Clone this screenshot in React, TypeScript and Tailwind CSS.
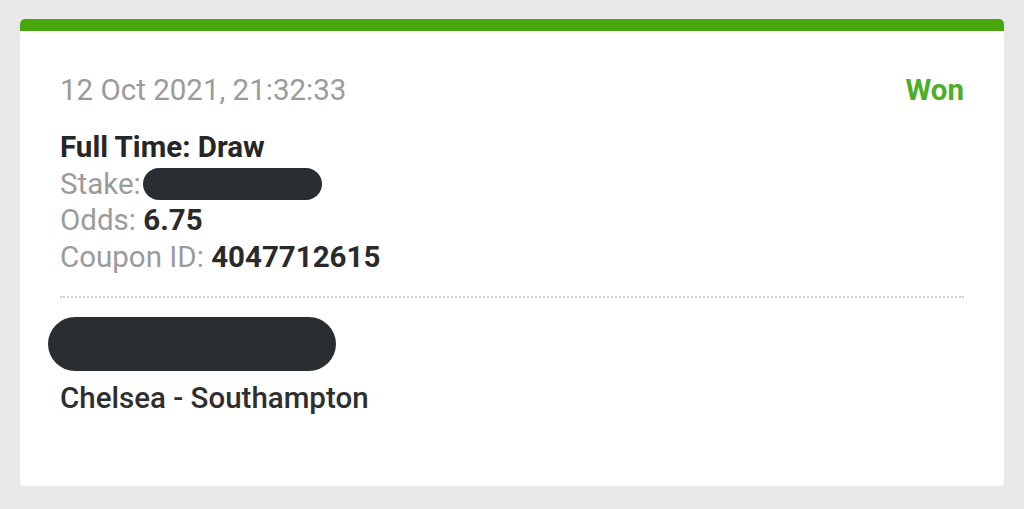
export default function App() {
  return (
    <main className="h-[509px] w-[1024px] bg-[#e8e8e8] px-[20px] pt-[19px] font-['Roboto',sans-serif]">
      <div className="h-[467px] overflow-hidden rounded-t-[5px] rounded-b-[3px] bg-white">
        <div className="h-[12px] bg-[#47a80e]" />
        <div className="px-[40px] pt-[41px]">
          <div className="flex items-center justify-between text-[29.5px] leading-[36px]">
            <span className="text-[#9b9b9b]">12 Oct 2021, 21:32:33</span>
            <span className="font-bold text-[#4dae27]">Won</span>
          </div>

          <div className="mt-[21px] text-[29.5px] leading-[36.67px]">
            <p className="font-bold text-[#262626]">Full Time: Draw</p>
            <p className="flex items-center text-[#9b9b9b]">
              Stake:
              <span className="ml-[2px] inline-block h-[32px] w-[179px] rounded-full bg-[#2a2d31]" />
            </p>
            <p className="text-[#9b9b9b]">
              Odds: <span className="font-bold text-[#2a2a2a]">6.75</span>
            </p>
            <p className="text-[#9b9b9b]">
              Coupon ID: <span className="font-bold text-[#2a2a2a]">4047712615</span>
            </p>
          </div>

          <div className="mt-[20px] border-t-2 border-dotted border-[#cfcfcf]" />

          <div className="-ml-[12px] mt-[19px] h-[54px] w-[288px] rounded-full bg-[#2a2d31]" />
          <p className="mt-[9px] text-[29.5px] font-medium leading-[36px] text-[#2f2f2f]">
            Chelsea - Southampton
          </p>
        </div>
      </div>
    </main>
  );
}
